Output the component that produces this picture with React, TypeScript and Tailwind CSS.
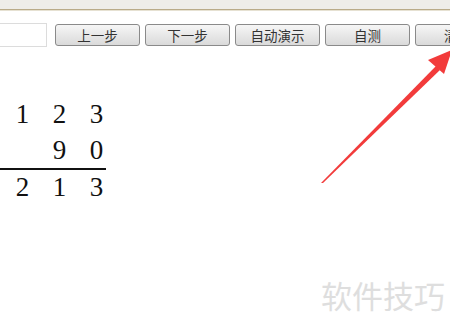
import React from "react";

const buttons = ["上一步", "下一步", "自动演示", "自测", "清除"];

function Digit({ d }: { d: string }) {
  return <span className="w-[37px] text-center inline-block">{d}</span>;
}

export default function App() {
  return (
    <div className="relative w-[450px] h-[330px] overflow-hidden bg-white" style={{ fontFamily: '"Liberation Sans", "Noto Sans CJK SC", sans-serif' }}>
      <div className="h-[9px] bg-[#eeede8]" />
      <div className="h-[1px] bg-[#b9ab88]" />
      <div className="h-[1px] bg-[#e6e1d2]" />
      <div className="flex items-center mt-[12px] h-[24px]">
        <div className="w-[47px] h-[24px] border border-[#dcdcdc] border-l-0 bg-white shrink-0" />
        <div className="flex gap-[5px] ml-[8px]">
          {buttons.map((b) => (
            <div
              key={b}
              className="w-[85px] h-[22px] shrink-0 rounded-[3px] border border-[#8a8a8a] bg-gradient-to-b from-[#f6f6f6] to-[#dadada] flex items-center justify-center text-[13.5px] text-[#333]"
              style={{ fontFamily: '"Noto Sans CJK SC", sans-serif' }}
            >
              {b}
            </div>
          ))}
        </div>
      </div>
      <div className="mt-[49px] text-[27px] leading-[36px] text-[#111]" style={{ fontFamily: '"Liberation Serif", serif' }}>
        <div className="flex pl-[4px]"><Digit d="1" /><Digit d="2" /><Digit d="3" /></div>
        <div className="flex pl-[4px]"><Digit d="" /><Digit d="9" /><Digit d="0" /></div>
        <div className="w-[106px] h-[2px] bg-[#111]" />
        <div className="flex pl-[4px] -mt-[1px]"><Digit d="2" /><Digit d="1" /><Digit d="3" /></div>
      </div>
      <svg className="absolute left-0 top-0" width="450" height="330" viewBox="0 0 450 330">
        <polygon points="321,183 323,183 440,70 436,66" fill="#f23b3b" />
        <polygon points="452,50 444,74 428,60" fill="#f23b3b" />
      </svg>
      <div
        className="absolute left-[321px] top-[277px] text-[31px] leading-[36px] text-[#dedede]"
        style={{ fontFamily: '"Noto Sans CJK SC", sans-serif' }}
      >
        软件技巧
      </div>
    </div>
  );
}
